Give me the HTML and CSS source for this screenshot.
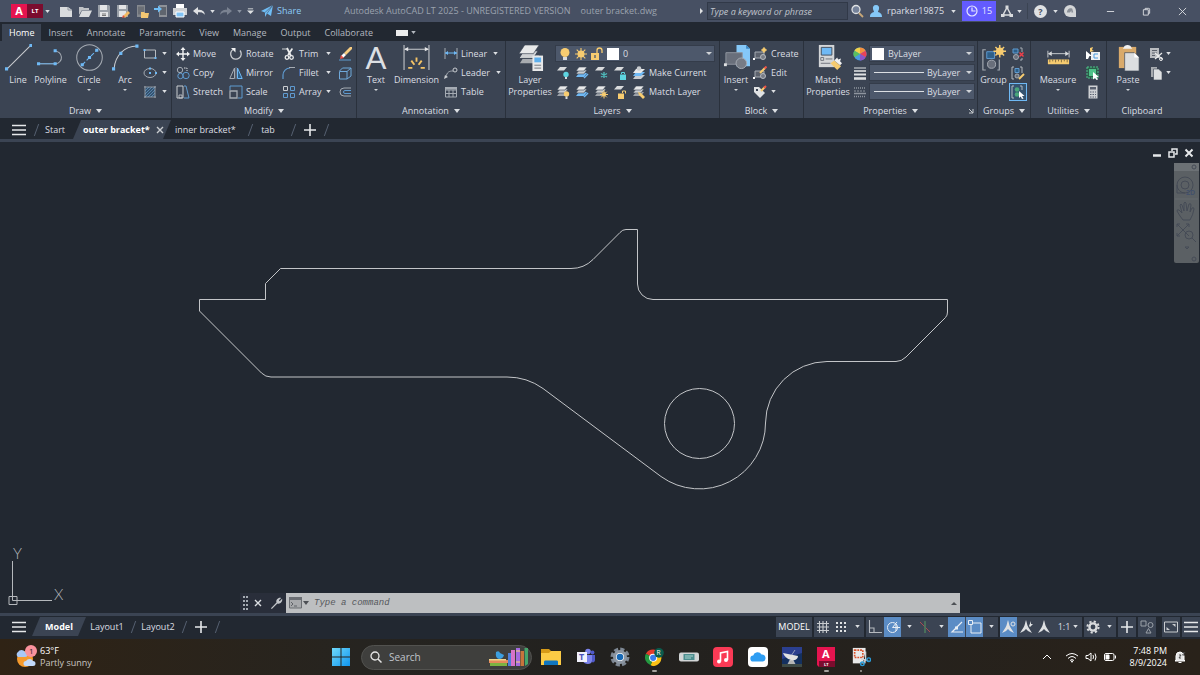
FILE: index.html
```html
<!DOCTYPE html>
<html lang="en">
<head>
  <meta charset="UTF-8" />
  <meta name="viewport" content="width=device-width, initial-scale=1.0" />
  <title>Autodesk AutoCAD LT 2025 - outer bracket.dwg</title>
  <link rel="stylesheet" href="styles.css">
</head>
<body>
  <!-- icon sprite -->
  <svg class="sprite" aria-hidden="true">
    <symbol id="i-down" viewBox="0 0 6 4"><path d="M0 0h6L3 4z" fill="currentColor"/></symbol>
    <symbol id="i-menu" viewBox="0 0 14 12"><path d="M0 1.5h14M0 6h14M0 10.5h14" stroke="#e6e8ea" stroke-width="1.5"/></symbol>
    <symbol id="i-plus" viewBox="0 0 12 12"><path d="M6 0v12M0 6h12" stroke="#e6e8ea" stroke-width="1.6"/></symbol>
    <symbol id="i-close" viewBox="0 0 8 8"><path d="M1 1l6 6M7 1L1 7" stroke="currentColor" stroke-width="1.4"/></symbol>

    <symbol id="i-new" viewBox="0 0 14 14"><path d="M1 3h8l4 3v7H1z" fill="#d9dbdd"/><path d="M9 3v3h4" fill="none" stroke="#8f959f"/></symbol>
    <symbol id="i-open" viewBox="0 0 14 14"><path d="M1 3h4l1 1h5v2H4l-3 5z" fill="#bfc2c6"/><path d="M4 6.5h10L11 13H1z" fill="#d9dbdd"/></symbol>
    <symbol id="i-save" viewBox="0 0 14 14"><path d="M1 1h11l1 1v11H1z" fill="#9aa0a8"/><path d="M3 1h7v5H3zM3 8h8v5H3z" fill="#e3e4e6"/><path d="M5 10h4M5 11.5h4" stroke="#777"/></symbol>
    <symbol id="i-saveas" viewBox="0 0 14 14"><path d="M1 1h11v12H1z" fill="#9aa0a8"/><path d="M3 1h7v4H3zM3 7h7v6H3z" fill="#e3e4e6"/><path d="M7 12l5-5 2 2-5 5z" fill="#f3b962"/><path d="M6 14l1-3 2 2z" fill="#e05040"/></symbol>
    <symbol id="i-device" viewBox="0 0 14 14"><path d="M2 1h8v12H2z" fill="#85898f"/><path d="M3 2.5h6v8H3z" fill="#6b6f76"/><path d="M6 8h3l1 1h4l-1 5H6z" fill="#f3c672"/></symbol>
    <symbol id="i-cloudsave" viewBox="0 0 14 14"><path d="M5 1h8v12H5z" fill="#8e9298"/><path d="M6 3h6v8H6z" fill="#5f656e"/><path d="M0 4h4V1.500L8 5 4 8.500V6H0z" fill="#6fbdf5"/></symbol>
    <symbol id="i-print" viewBox="0 0 14 14"><path d="M3 0h8v4H3z" fill="#fff"/><path d="M0 4h14v7H0z" fill="#cfd2d5"/><path d="M3 8h8v5H3z" fill="#81c3f5" stroke="#fff"/></symbol>
    <symbol id="i-undo" viewBox="0 0 14 12"><path d="M6 2L1 6l5 4V7.300c3 0 5 0 7 2.700-.5-4-3-5.300-7-5.300z" fill="#dfe1e3"/></symbol>
    <symbol id="i-redo" viewBox="0 0 14 12"><path d="M8 2l5 4-5 4V7.300c-3 0-5 0-7 2.700.5-4 3-5.300 7-5.300z" fill="#7a8291"/></symbol>
    <symbol id="i-custom" viewBox="0 0 8 8"><path d="M1 1.5h6" stroke="#dfe1e3"/><path d="M0 3.5h8L4 7.500z" fill="#dfe1e3"/></symbol>
    <symbol id="i-share" viewBox="0 0 12 12"><path d="M0 6L12 0l-2 11-4-2.500L4 12V7.500z" fill="#6fbdf5"/><path d="M4 7.500L12 0 6 8.500" stroke="#475063" fill="none" stroke-width=".6"/></symbol>
    <symbol id="i-mag" viewBox="0 0 14 14"><circle cx="6" cy="5.500" r="4" fill="#75829a" stroke="#dfe1e3" stroke-width="1.3"/><path d="M9 9l4 4" stroke="#c9a878" stroke-width="1.8"/></symbol>
    <symbol id="i-user" viewBox="0 0 14 14"><path d="M7 1c2.500 0 3.500 2 3 4-.3 1.500-1 2-1 3 2 .7 4 1.500 4 5H1c0-3.500 2-4.300 4-5 0-1-.7-1.500-1-3-.5-2 .5-4 3-4z" fill="#85c8f8"/></symbol>
    <symbol id="i-clock" viewBox="0 0 12 12"><circle cx="6" cy="6" r="5" fill="none" stroke="#e6e6ff" stroke-width="1.2"/><path d="M6 2.500V6h3.500" fill="none" stroke="#e6e6ff" stroke-width="1.2"/></symbol>
    <symbol id="i-apps" viewBox="0 0 12 12"><path d="M6 2.500L2 10h8z" fill="none" stroke="#d9dbdd" stroke-width="1.5"/><path d="M4.500.500h3v3h-3zM0 9h3.500v3H0zM8.500 9H12v3H8.500z" fill="#d9dbdd"/></symbol>
    <symbol id="i-assist" viewBox="0 0 13 13"><path d="M6.500 0a6.500 6.500 0 0 1 6.500 6.500V13H6.500a6.500 6.500 0 0 1 0-13z" fill="#d4d6d8"/><path d="M3 8c1-4 3-5 6-4l1 4H8V6L6.500 8z" fill="#8a8f97"/></symbol>

    <symbol id="i-line" viewBox="0 0 26 26"><path d="M2 24L25 1" stroke="#c9ccd0"/><path d="M0 22.500h3v3H0zM23.500 0h3v3h-3z" fill="#6fb9f5"/></symbol>
    <symbol id="i-pline" viewBox="0 0 26 26"><path d="M2 19h16a6 6 0 1 0-1-12" fill="none" stroke="#a5abb3"/><path d="M2 19h16" stroke="#6fa9db"/><path d="M0 17.500h3v3H0zM16 17.500h3v3h-3zM16 5h3v3h-3z" fill="#6fb9f5"/></symbol>
    <symbol id="i-circle" viewBox="0 0 26 26"><circle cx="13" cy="13" r="12.300" fill="none" stroke="#a5abb3"/><path d="M6 20L20 6" stroke="#6fb9f5" stroke-dasharray="4 2"/><path d="M4.500 18.500h3v3h-3zM11.500 11.500h3v3h-3zM18.500 4.500h3v3h-3z" fill="#6fb9f5"/></symbol>
    <symbol id="i-arc" viewBox="0 0 26 26"><path d="M2 24C3 11 12 2 24 2" fill="none" stroke="#c9ccd0"/><path d="M0 22.500h3v3H0zM7 7.500h3v3H7zM22.500.500h3v3h-3z" fill="#6fb9f5"/></symbol>
    <symbol id="i-rect" viewBox="0 0 14 14"><path d="M1.500 3h11v8h-11z" fill="none" stroke="#b6bac0"/><path d="M.5 2h2v2h-2zM11.500 10h2v2h-2z" fill="#6fb9f5"/></symbol>
    <symbol id="i-ellipse" viewBox="0 0 14 14"><ellipse cx="7" cy="7" rx="6" ry="4.500" fill="none" stroke="#a5abb3"/><path d="M6 6h2v2H6zM12 6h2v2h-2zM6 1.500h2v2H6z" fill="#6fb9f5"/></symbol>
    <symbol id="i-hatch" viewBox="0 0 14 14"><path d="M2 2h10v10H2z" fill="#35536f"/><path d="M2 6l4-4M2 9l7-7M2 12L12 2M5 12l7-7M8 12l4-4" stroke="#5f8fbd" stroke-width=".8"/><path d="M2 1v12M12 1v12M1 2h12M1 12h12" stroke="#a5abb3" stroke-width=".8"/></symbol>

    <symbol id="i-move" viewBox="0 0 14 14"><path d="M7 2v10M2 7h10" stroke="#f0f1f2" stroke-width="1.4"/><path d="M7 0l2.500 3h-5zM7 14l2.500-3h-5zM0 7l3-2.500v5zM14 7l-3-2.500v5z" fill="#f0f1f2"/></symbol>
    <symbol id="i-copy" viewBox="0 0 14 14"><circle cx="4" cy="4" r="2.700" fill="none" stroke="#a5abb3"/><path d="M8 2h3v3" fill="none" stroke="#d9dbdd" stroke-dasharray="1.5 1"/><circle cx="4.500" cy="10" r="2.700" fill="none" stroke="#5f9bd0"/><circle cx="10" cy="9.500" r="3.200" fill="none" stroke="#5f9bd0"/></symbol>
    <symbol id="i-stretch" viewBox="0 0 14 14"><path d="M1 1h6v12H1z" fill="none" stroke="#c9ccd0"/><path d="M3 10h3v3H3z" fill="none" stroke="#c9ccd0" stroke-width=".8"/><path d="M8 1h2l3 12H8" fill="none" stroke="#5f9bd0"/></symbol>
    <symbol id="i-rotate" viewBox="0 0 14 14"><path d="M4 2.500a5.300 5.300 0 1 0 7 1" fill="none" stroke="#c9ccd0" stroke-width="1.3"/><path d="M2 1h4.500v4.500z" fill="#f0f1f2"/></symbol>
    <symbol id="i-mirror" viewBox="0 0 14 14"><path d="M5.500 2v10.500H.8z" fill="none" stroke="#a5abb3"/><path d="M8.500 2v10.500h4.700z" fill="#2e5f88" stroke="#6fb9f5"/><path d="M7 1v12" stroke="#8d939d" stroke-width=".7"/></symbol>
    <symbol id="i-scale" viewBox="0 0 14 14"><path d="M1 5V1h12v12H9" fill="none" stroke="#5f9bd0"/><path d="M1 6h7v7H1z" fill="none" stroke="#a5abb3" stroke-width="1.3"/></symbol>
    <symbol id="i-trim" viewBox="0 0 14 14"><path d="M0 2h6M9 2h2" stroke="#c9ccd0"/><path d="M5 1l4 8M10 2L6 8" stroke="#eceded" stroke-width="1.8"/><circle cx="5" cy="10.500" r="1.800" fill="none" stroke="#eceded" stroke-width="1.3"/><circle cx="9.500" cy="10.500" r="1.800" fill="none" stroke="#eceded" stroke-width="1.3"/></symbol>
    <symbol id="i-fillet" viewBox="0 0 14 14"><path d="M1 13V9a7 7 0 0 1 7-7" fill="none" stroke="#5f9bd0" stroke-width="1.2"/><path d="M7 1.500h6" stroke="#a5abb3"/></symbol>
    <symbol id="i-array" viewBox="0 0 14 14"><path d="M1.500 1.500h4v4h-4z" fill="none" stroke="#c9ccd0"/><path d="M8.500 1.500h4v4h-4zM1.500 8.500h4v4h-4zM8.500 8.500h4v4h-4z" fill="none" stroke="#5f9bd0"/></symbol>
    <symbol id="i-erase" viewBox="0 0 14 14"><path d="M6 6l6-6 2 0v2L8 8z" fill="#f7cc80"/><path d="M3 9l3-3 2 2-3 3z" fill="#fff"/><path d="M2 12l1-4 3 3z" fill="#ee5348"/><path d="M1 13h12" stroke="#5f9bd0"/></symbol>
    <symbol id="i-explode" viewBox="0 0 14 14"><path d="M1.500 5.500h7.500V13H1.500zM1.500 5l3-3H13l-4 3.500M13 2v8l-4 3" fill="none" stroke="#6fa9db"/></symbol>
    <symbol id="i-offset" viewBox="0 0 14 14"><path d="M13 3H6a4 4 0 0 0 0 8h7" fill="none" stroke="#a5abb3"/><path d="M13 5.500H7a1.500 1.500 0 0 0 0 3h6" fill="none" stroke="#5f9bd0"/></symbol>

    <symbol id="i-dim" viewBox="0 0 26 26"><path d="M1 1v24M25 1v24M2 5h22" stroke="#c9ccd0"/><path d="M1 5l4-2v4zM25 5l-4-2v4z" fill="#e3e4e6"/><path d="M5 23h4M17 23h4M8 16l3 4M18 16l-3 4M13 13v4" stroke="#f5c466" stroke-width="1.8"/></symbol>
    <symbol id="i-linear" viewBox="0 0 14 14"><path d="M1 1v11M13 1v11" stroke="#a5abb3"/><path d="M1 6h12" stroke="#6fb9f5"/><path d="M1 6l3-2v4zM13 6l-3-2v4z" fill="#6fb9f5"/></symbol>
    <symbol id="i-leader" viewBox="0 0 14 14"><path d="M2 11c1-5 3-6 7-6" fill="none" stroke="#a5abb3"/><path d="M0 13l1-4 3 2z" fill="#c9ccd0"/><circle cx="11" cy="4" r="2" fill="none" stroke="#c9ccd0"/></symbol>
    <symbol id="i-table" viewBox="0 0 14 14"><path d="M1.500 2.500h11V12h-11zM1.500 5h11M1.500 8.500h11M5 5v7M9 5v7" fill="none" stroke="#a5abb3"/><path d="M1 2h12v2.500H1z" fill="#a5abb3"/></symbol>

    <symbol id="i-layerprops" viewBox="0 0 28 28"><path d="M8 12l-5 8h15l5-8z" fill="#a7abb0"/><path d="M7 7l-5 8h15l5-8z" fill="#cfd1d4" stroke="#3b4453"/><path d="M8 1L2 10h15l6-9z" fill="#e8e9ea" stroke="#3b4453" stroke-width=".7"/><path d="M16 12h11v16H16z" fill="#e8e9ea"/><path d="M18 14h7v5h-7z" fill="#5eb0ee"/><path d="M18 22h7M18 25h7" stroke="#70757d"/></symbol>
    <symbol id="i-stack" viewBox="0 0 14 14"><path d="M4 7L1 11h8l3-4z" fill="#9ca1a8"/><path d="M4 4L1 8h8l3-4z" fill="#c9ccd0" stroke="#3b4453" stroke-width=".6"/><path d="M4 1L1 5h8l3-4z" fill="#e8e9ea" stroke="#3b4453" stroke-width=".6"/></symbol>
    <symbol id="i-sheet" viewBox="0 0 14 14"><path d="M4 1L1 4.500h7l3-3.500z" fill="#d9dbdd"/></symbol>
    <symbol id="i-loff" viewBox="0 0 14 14"><use href="#i-sheet"/><circle cx="10" cy="8.500" r="2.700" fill="#5ed4e0"/><path d="M9 11h2v2H9z" fill="#d9dbdd"/></symbol>
    <symbol id="i-liso" viewBox="0 0 14 14"><path d="M4 7L1 11h8l3-4z" fill="#6fb9f5"/><path d="M4 4L1 8h8l3-4z" fill="#c9ccd0" stroke="#3b4453" stroke-width=".6"/><path d="M4 1L1 5h8l3-4z" fill="#e8e9ea" stroke="#3b4453" stroke-width=".6"/><path d="M9 12l4-4" stroke="#6fb9f5" stroke-width="1.5"/></symbol>
    <symbol id="i-lfrz" viewBox="0 0 14 14"><use href="#i-sheet"/><path d="M10 6v6M7 7.500l6 3.500M13 7.500L7 11" stroke="#4fb9ba" stroke-width="1.4"/></symbol>
    <symbol id="i-llock" viewBox="0 0 14 14"><use href="#i-sheet"/><path d="M7 8.500h6V14H7z" fill="#5ed4e0"/><path d="M8.500 8V6.500h3V8" fill="none" stroke="#5ed4e0"/></symbol>
    <symbol id="i-lcur" viewBox="0 0 14 14"><path d="M4 9l-3 4h8l4-4z" fill="#c9ccd0"/><path d="M4 6l-3 4h8l4-4z" fill="#6fb9f5"/><path d="M4 3L1 7h8l4-4z" fill="#e8e9ea"/><circle cx="7" cy="2.500" r="2.300" fill="#c9ccd0"/></symbol>
    <symbol id="i-lon" viewBox="0 0 14 14"><use href="#i-stack"/><circle cx="10.500" cy="9" r="2.700" fill="#f7cc70"/><path d="M9.500 11.500h2V14h-2z" fill="#d9dbdd"/></symbol>
    <symbol id="i-lthaw" viewBox="0 0 14 14"><use href="#i-stack"/><path d="M10 5.500v8M6 9.500h8M7.200 6.700l5.600 5.600M12.800 6.700l-5.600 5.600" stroke="#f7cc70"/><circle cx="10" cy="9.500" r="2" fill="#f7cc70"/></symbol>
    <symbol id="i-lunlock" viewBox="0 0 14 14"><use href="#i-sheet"/><path d="M5 8.500h6V14H5z" fill="#f7cc70"/><path d="M9.500 8V6h3v2.500" fill="none" stroke="#f7cc70"/></symbol>
    <symbol id="i-lmatch" viewBox="0 0 14 14"><use href="#i-stack"/><path d="M6 7l3 1 4 4-2 2-4-4z" fill="#f7cc70"/></symbol>
    <symbol id="i-bulb" viewBox="0 0 14 14"><circle cx="7" cy="5.500" r="4.500" fill="#f7cc70"/><path d="M5 10h4v3H5z" fill="#d9dbdd"/></symbol>
    <symbol id="i-sun" viewBox="0 0 14 14"><path d="M7 1v12M1 7h12M2.700 2.700l8.600 8.600M11.300 2.700l-8.600 8.600" stroke="#f7cc70" stroke-width="1.1"/><circle cx="7" cy="7" r="3.500" fill="#f7cc70"/></symbol>
    <symbol id="i-unlock" viewBox="0 0 14 14"><path d="M1 6h8v7H1z" fill="#f7cc70"/><path d="M7 6V3.500a2.500 2.500 0 0 1 5 0V6" fill="none" stroke="#f7cc70" stroke-width="1.3"/><path d="M5 8v3" stroke="#4d586b" stroke-width="1.3"/></symbol>

    <symbol id="i-insert" viewBox="0 0 28 28"><path d="M14 1h10l4 4v18H14z" fill="#85c8f8"/><path d="M24 1v4h4" fill="#3b87c4"/><path d="M3 9h17v12H3z" fill="#696f7b" stroke="#8f959f"/><circle cx="19" cy="20" r="5.500" fill="#777c86" stroke="#a5abb3"/><path d="M1 20h3v3H1z" fill="#dfe1e3"/></symbol>
    <symbol id="i-create" viewBox="0 0 14 14"><path d="M2 5h9v6H2z" fill="#5c626d" stroke="#a5abb3"/><circle cx="10" cy="10" r="2.500" fill="#777c86" stroke="#b6bac0"/><circle cx="11" cy="3" r="2" fill="#f7cc70"/><path d="M11 0v6M8 3h6" stroke="#f7cc70"/><path d="M0 11h2v2H0z" fill="#fff"/></symbol>
    <symbol id="i-edit" viewBox="0 0 14 14"><path d="M2 5h9v6H2z" fill="#5c626d" stroke="#a5abb3"/><circle cx="10" cy="10" r="2.500" fill="#777c86" stroke="#b6bac0"/><path d="M7 7l5-5" stroke="#f7cc70" stroke-width="2"/><path d="M11.500 2.500l2-2" stroke="#ee5348" stroke-width="2"/><path d="M0 11h2v2H0z" fill="#fff"/></symbol>
    <symbol id="i-attr" viewBox="0 0 14 14"><path d="M1 2h5l6 6-5 5-6-6z" fill="#dfe1e3"/><path d="M3 4h2v2H3z" fill="#3b4453"/><path d="M8 6l4-4" stroke="#f7cc70" stroke-width="2"/><path d="M11 3l2-2" stroke="#ee5348" stroke-width="2"/></symbol>
    <symbol id="i-matchprops" viewBox="0 0 28 28"><path d="M4 1h16v23H4z" fill="#d4d6d8"/><path d="M6.500 3.500h11v8h-11z" fill="#6fb9f5" stroke="#45505f"/><path d="M6 14h3v3H6zM11 15.500h7M6 20h10" stroke="#70757d" fill="none"/><path d="M16 20l4-3 7 6-4 4z" fill="#f7cc70"/><path d="M20 17l3-3 1 2 3-1-1 3 2 2-2 2z" fill="#f2f2f2"/></symbol>
    <symbol id="i-lwt" viewBox="0 0 14 14"><path d="M1 2h12" stroke="#dfe1e3"/><path d="M1 5h12" stroke="#dfe1e3" stroke-width="1.6"/><path d="M1 8.500h12" stroke="#dfe1e3" stroke-width="2"/><path d="M1 12.500h12" stroke="#dfe1e3" stroke-width="2.600"/></symbol>
    <symbol id="i-ltype" viewBox="0 0 14 14"><path d="M1 3h12M1 11.500h12" stroke="#8f959f" stroke-width="1.5" stroke-dasharray="1 1"/><path d="M1 6h12" stroke="#8f959f" stroke-dasharray="2 1"/><path d="M1 8.500h12" stroke="#8f959f" stroke-width="1.5"/></symbol>

    <symbol id="i-group" viewBox="0 0 28 28"><path d="M6 6H3v21h3M18 27h2V16" fill="none" stroke="#a5abb3" stroke-width="1.2"/><path d="M7 8h8v7H7z" fill="#2e5f88" stroke="#5f9bd0"/><circle cx="12" cy="21" r="4.200" fill="#696f7b" stroke="#a5abb3"/><path d="M20.500 1v13M14 7.500h13M16 3l9 9M25 3l-9 9" stroke="#f7cc70" stroke-width="1.5"/><circle cx="20.500" cy="7.500" r="4" fill="#f7cc70"/></symbol>
    <symbol id="i-ungroup" viewBox="0 0 14 14"><path d="M2 2h5v4H2z" fill="#2e5f88" stroke="#5f9bd0"/><circle cx="5" cy="10" r="2.500" fill="#696f7b" stroke="#a5abb3"/><path d="M9 1h2v4M11 11v2H9" fill="none" stroke="#a5abb3"/><path d="M8.500 5.500l4 4M12.500 5.500l-4 4" stroke="#f0404a" stroke-width="1.5"/></symbol>
    <symbol id="i-groupedit" viewBox="0 0 14 14"><path d="M3 1H1v12h2M9 1h2v6" fill="none" stroke="#b6bac0"/><path d="M4 2.500h4v4H4z" fill="#2e5f88" stroke="#5f9bd0"/><circle cx="6" cy="10" r="2" fill="#696f7b" stroke="#a5abb3"/><path d="M8 13l5-5" stroke="#f7cc70" stroke-width="2"/></symbol>
    <symbol id="i-groupsel" viewBox="0 0 14 14"><path d="M3 1H1v12h2M9 1h2v4" fill="none" stroke="#b6bac0"/><circle cx="6" cy="4.500" r="2.300" fill="#4aa67b"/><circle cx="6" cy="9.500" r="2.300" fill="#4aa67b"/><path d="M8 6l5.500 5H11l1.500 2.500-1.500.500-1.300-2.500L8 13z" fill="#fff"/></symbol>
    <symbol id="i-measure" viewBox="0 0 28 28"><path d="M3 7v7M25 7v7M4 10h20" stroke="#c9ccd0"/><path d="M3 10l4-2.500v5zM25 10l-4-2.500v5z" fill="#d9dbdd"/><path d="M3 16h22v5H3z" fill="#f7cc70"/><path d="M5 16v3M8 16v2M11 16v3M14 16v2M17 16v3M20 16v2M23 16v3" stroke="#6b5b36" stroke-width=".8"/></symbol>
    <symbol id="i-qselect" viewBox="0 0 14 14"><path d="M5 5h9v8H5z" fill="#f0f1f2"/><path d="M8 7v4h4M8 7h4" fill="none" stroke="#4a9be0"/><path d="M0 4l6 5H3.500L2 12H0z" fill="#fff"/><path d="M4 1l3-1-1 3 2 1-4 1z" fill="#f7cc70"/></symbol>
    <symbol id="i-selall" viewBox="0 0 14 14"><path d="M1 1h11v11H1z" fill="#2b5f4a" stroke="#4fc28a" stroke-dasharray="2 1"/><path d="M3 3h7v7H3z" fill="#4fc28a"/><path d="M7 6l6 5h-2.500l1.500 2.500-1.500.500L9 12l-2 1.500z" fill="#fff"/></symbol>
    <symbol id="i-calc" viewBox="0 0 14 14"><path d="M2.500.500h9v13h-9z" fill="#cfd1d4"/><path d="M4 2h6v2.500H4z" fill="#596170"/><path d="M4 7h6M4 9.500h6M4 12h6" stroke="#596170" stroke-width="1.2" stroke-dasharray="1.5 1"/></symbol>
    <symbol id="i-paste" viewBox="0 0 28 28"><path d="M4 3h18v22H4z" fill="#d9aa6b"/><path d="M9 4c0-4 8-4 8 0l1 1H8z" fill="#f0f1f2"/><path d="M10 9h10l5 5v14H10z" fill="#dcdee0" stroke="#3b4453" stroke-width=".7"/><path d="M20 9v5h5" fill="#fff"/></symbol>
    <symbol id="i-cut" viewBox="0 0 14 14"><path d="M1 1h9v10H1z" fill="#b9bcc0"/><path d="M3 3.500h5M3 6h5M3 8.500h3" stroke="#5b616b"/><path d="M6 6l7 6M13 6l-7 6" stroke="#eceded" stroke-width="1.2"/><circle cx="12" cy="12" r="1.500" fill="none" stroke="#eceded"/></symbol>
    <symbol id="i-copyclip" viewBox="0 0 14 14"><path d="M2 1h6v10H2z" fill="#a7abb0"/><path d="M4.500 3h5L13 6v8H4.500z" fill="#dfe1e3" stroke="#3b4453" stroke-width=".6"/></symbol>
    <symbol id="i-wheel" viewBox="0 0 14 14"><circle cx="7" cy="7" r="6.500" fill="#4a9be0"/><path d="M7 7V.5a6.500 6.500 0 0 1 5.600 3.200z" fill="#f5903d"/><path d="M7 7V.5a6.500 6.500 0 0 0-5.600 3.200z" fill="#f0d24a"/><path d="M7 7L1.400 3.700a6.500 6.500 0 0 0 0 6.600z" fill="#5bbf5d"/><path d="M7 7l5.600-3.300a6.500 6.500 0 0 1 0 6.600z" fill="#ea4257"/><path d="M7 7l5.600 3.300A6.500 6.500 0 0 1 7 13.500z" fill="#8d53c7"/></symbol>

    <symbol id="s-grid" viewBox="0 0 14 14"><path d="M3.500 1v12M7 1v12M10.500 1v12M1 3.500h12M1 7h12M1 10.500h12" stroke="#c9ccd0" stroke-width="1.1"/></symbol>
    <symbol id="s-dots" viewBox="0 0 14 14"><path d="M2 3h11M2 7h11M2 11h11" stroke="#dfe1e3" stroke-width="2" stroke-dasharray="2 2"/></symbol>
    <symbol id="s-ortho" viewBox="0 0 14 14"><path d="M1.500 0v12.500H14M1.500 8H6v4.500" fill="none" stroke="#b6bac0" stroke-width="1.1"/></symbol>
    <symbol id="s-polar" viewBox="0 0 14 14"><circle cx="6.500" cy="7.500" r="5" fill="none" stroke="#e8eef5"/><path d="M6.500 7.500H14M6.500 7.500L11 2M10 4v7" stroke="#e8eef5"/></symbol>
    <symbol id="s-iso" viewBox="0 0 14 14"><path d="M2 2l10 10" stroke="#a94a52"/><path d="M7 1v12" stroke="#4d7a5d" stroke-width="1.6"/></symbol>
    <symbol id="s-angle" viewBox="0 0 14 14"><path d="M12 2L2 12h11" fill="none" stroke="#e8eef5" stroke-width="1.2"/><path d="M5 6.500h3v3H5z" fill="#e8eef5"/></symbol>
    <symbol id="s-osnap" viewBox="0 0 14 14"><path d="M3 3h10v10H3z" fill="none" stroke="#e8eef5"/><path d="M.500.500h4v4h-4z" fill="#5b8cc5" stroke="#e8eef5"/></symbol>
    <symbol id="s-person" viewBox="0 0 14 14"><path d="M6 0c1 3 1 5 2.500 7.500L12 13l-4-2-2-2-2 2-4 2 3.500-5.500C5 5 5 3 6 0z" fill="#dfe1e3"/></symbol>
    <symbol id="s-person-o" viewBox="0 0 14 14"><use href="#s-person"/><circle cx="11" cy="4" r="2" fill="none" stroke="#dfe1e3"/></symbol>
    <symbol id="s-person-s" viewBox="0 0 14 14"><use href="#s-person"/><path d="M9 6l2-5 0 3 2 0-3 3z" fill="#dfe1e3"/></symbol>
    <symbol id="s-gear" viewBox="0 0 14 14"><circle cx="7" cy="7" r="3.600" fill="none" stroke="#d9dbdd" stroke-width="2.400"/><circle cx="7" cy="7" r="5.600" fill="none" stroke="#d9dbdd" stroke-width="2" stroke-dasharray="2.200 2.200"/></symbol>
    <symbol id="s-isolate" viewBox="0 0 14 14"><path d="M1 1h5v5H1zM6 13l2.500-4.500L11 13z" fill="none" stroke="#9aa0a8"/><circle cx="10.500" cy="5" r="2.500" fill="none" stroke="#9aa0a8"/></symbol>
    <symbol id="s-clean" viewBox="0 0 14 12"><path d="M.5 1h13v10H.5z" fill="none" stroke="#c9ccd0"/><path d="M8 3h3.500v3zM6 9H2.500V6z" fill="#c9ccd0"/></symbol>

    <symbol id="t-win" viewBox="0 0 20 20"><path d="M1 1h8.500v8.500H1zM10.500 1H19v8.500h-8.500zM1 10.500h8.500V19H1zM10.500 10.500H19V19h-8.500z" fill="url(#gwin)"/></symbol>
    <symbol id="t-folder" viewBox="0 0 20 20"><path d="M0 2h8l2 2h10v14H0z" fill="#d69a17"/><path d="M0 6h8l2-2h10v14H0z" fill="#fbcb45"/><path d="M3 18v-3c0-1 .5-1.500 1.500-1.500h11c1 0 1.500.500 1.500 1.500v3z" fill="#1076c0"/></symbol>
    <symbol id="t-teams" viewBox="0 0 20 20"><circle cx="12" cy="4.500" r="2.800" fill="#7b83eb"/><circle cx="16.500" cy="5.500" r="1.900" fill="#5059c9"/><path d="M7 8h9v6c0 4-8 4-9 0z" fill="#7b83eb"/><path d="M16 8h3v5c0 2-2 3-3 2z" fill="#5059c9"/><path d="M1 5h10v10H1z" fill="#f1f1fb"/></symbol>
    <symbol id="t-gear" viewBox="0 0 20 20"><circle cx="10" cy="10" r="7.500" fill="none" stroke="#7e8894" stroke-width="4" stroke-dasharray="3.900 1.990"/><circle cx="10" cy="10" r="5.500" fill="#fff" stroke="#8c96a2" stroke-width="3"/><circle cx="10" cy="10" r="3.300" fill="#1668b5"/></symbol>
    <symbol id="t-chrome" viewBox="0 0 24 22"><path d="M11 12L2.300 7A10 10 0 0 1 20 8z" fill="#e33b2e"/><path d="M11 12l9-4a10 10 0 0 1-9 14l-3-1z" fill="#fbc116"/><path d="M11 12l-3 9A10 10 0 0 1 2.300 7z" fill="#249a41"/><circle cx="11" cy="12" r="4.800" fill="#fff"/><circle cx="11" cy="12" r="3.700" fill="#3b7ded"/><circle cx="18" cy="6" r="5.800" fill="#0b5c4d"/></symbol>
    <symbol id="t-device" viewBox="0 0 20 20"><rect y="5.500" width="20" height="9" rx="2" fill="#d2d5d6"/><path d="M4.500 7h11v6h-11z" fill="#4b8d8e"/><path d="M6 9h8M6 11h6" stroke="#a9d4ce"/></symbol>
    <symbol id="t-music" viewBox="0 0 20 20"><rect width="20" height="20" rx="4" fill="#fa3a55"/><path d="M7.500 14.500V6l7-1.500V13" fill="none" stroke="#fff" stroke-width="1.6"/><circle cx="6" cy="14.500" r="2" fill="#fff"/><circle cx="13" cy="13" r="2" fill="#fff"/></symbol>
    <symbol id="t-cloud" viewBox="0 0 20 20"><rect width="20" height="20" rx="4" fill="#fff"/><path d="M5.500 14.500a3 3 0 0 1-.3-6 4.500 4.500 0 0 1 8.300-1 3.600 3.600 0 0 1 1.500 7z" fill="#2e9df2"/></symbol>
    <symbol id="t-dish" viewBox="0 0 20 20"><path d="M0 0h20v20H0z" fill="#14305f"/><path d="M0 0h20v6L0 12z" fill="#2b3f8f"/><path d="M1 6l15 3c0 3-3 5-7 4S2 9 1 6z" fill="#e2e2e2"/><path d="M9 9l4-6M8 13l-3 6h9l-3-6z" fill="#b5b5b5" stroke="#ddd" stroke-width=".6"/><path d="M0 17h20v3H0z" fill="#3e4a46"/></symbol>
    <symbol id="t-acad" viewBox="0 0 20 20"><path d="M1 0h18v20H3l-2-2z" fill="#e5144f"/><path d="M3 14h16v6H3z" fill="#7b0c2e"/></symbol>
    <symbol id="t-snip" viewBox="0 0 22 22"><path d="M2 1h14v17H2z" fill="#e9e9e9"/><path d="M4 3.500h9v8H4z" fill="none" stroke="#d9532c" stroke-width="1.8" stroke-dasharray="2 1"/><path d="M16 5v9l-3 4M11 13l8 2" stroke="#cfd1d4" stroke-width="1.6"/><circle cx="12.500" cy="18.500" r="2" fill="none" stroke="#2a9bd8" stroke-width="1.5"/><circle cx="19.500" cy="14" r="2" fill="none" stroke="#2a9bd8" stroke-width="1.5"/></symbol>
    <symbol id="t-books" viewBox="0 0 40 20"><path d="M0 13h19v3H0z" fill="#e58a5b"/><path d="M1 16h17v3H1z" fill="#7cb342"/><path d="M0 12h17v1.500H0z" fill="#f1d48a"/><path d="M7 5q3-2 4 1l4 2q-1 4-5 4-4-1-3-7z" fill="#3c9fe0"/><path d="M19 6h3v13h-3z" fill="#4f7fd6"/><path d="M22 3h4v16h-4z" fill="#d873c8"/><path d="M27 1h4v18h-4z" fill="#a46be0"/><path d="M27 4h4M27 15h4" stroke="#ffd27a"/><path d="M31.500 4H35v15h-3.500z" fill="#c8743c"/><path d="M35.500 1H39v16l-3 2z" fill="#45a56b"/></symbol>
    <linearGradient id="gwin" x1="0" y1="0" x2="1" y2="1"><stop offset="0" stop-color="#6fd9fb"/><stop offset="1" stop-color="#0f94ee"/></linearGradient>
  </svg>

  <!-- title bar -->
  <header class="titlebar">
    <button class="app-logo" aria-label="Application menu"><b>A</b><small>LT</small></button>
    <button class="arrow" aria-label="Menu"><svg><use href="#i-down"/></svg></button>
    <div class="qat">
      <button aria-label="New"><svg><use href="#i-new"/></svg></button>
      <button aria-label="Open"><svg><use href="#i-open"/></svg></button>
      <button aria-label="Save"><svg><use href="#i-save"/></svg></button>
      <button aria-label="Save as"><svg><use href="#i-saveas"/></svg></button>
      <button aria-label="Open from web"><svg><use href="#i-device"/></svg></button>
      <button aria-label="Save to web"><svg><use href="#i-cloudsave"/></svg></button>
      <button aria-label="Plot"><svg><use href="#i-print"/></svg></button>
      <button aria-label="Undo"><svg><use href="#i-undo"/></svg></button>
    </div>
    <button class="arrow" aria-label="Undo list"><svg><use href="#i-down"/></svg></button>
    <button class="tool" aria-label="Redo"><svg class="ico"><use href="#i-redo"/></svg></button>
    <button class="arrow dim" aria-label="Redo list"><svg><use href="#i-down"/></svg></button>
    <button class="customize" aria-label="Customize"><svg><use href="#i-custom"/></svg></button>
    <button class="share"><svg><use href="#i-share"/></svg>Share</button>
    <div class="window-title"><span>Autodesk AutoCAD LT 2025 - UNREGISTERED VERSION</span><span>outer bracket.dwg</span></div>
    <span class="search-expand"></span>
    <input class="help-search" type="text" placeholder="Type a keyword or phrase" aria-label="Search help">
    <button class="tool" aria-label="Search"><svg class="ico"><use href="#i-mag"/></svg></button>
    <button class="account"><svg class="ico"><use href="#i-user"/></svg>rparker19875<svg class="caret"><use href="#i-down"/></svg></button>
    <button class="trial"><svg><use href="#i-clock"/></svg>15</button>
    <button class="app-store" aria-label="App store"><svg class="ico12"><use href="#i-apps"/></svg><svg class="caret"><use href="#i-down"/></svg></button>
    <button class="help" aria-label="Help"><i>?</i><svg class="caret"><use href="#i-down"/></svg><svg class="ico12"><use href="#i-assist"/></svg></button>
    <div class="win-controls">
      <button aria-label="Minimize"><svg viewBox="0 0 10 10"><path d="M1 5h8"/></svg></button>
      <button aria-label="Restore"><svg viewBox="0 0 10 10"><path d="M1.500 3h5.500v6H1.500zM3.500 3V1.500h4q1 0 1 1V7H7"/></svg></button>
      <button aria-label="Close"><svg viewBox="0 0 10 10"><path d="M1 1l8 8M9 1L1 9"/></svg></button>
    </div>
  </header>

  <nav class="ribbon-tabs">
    <button class="active">Home</button>
    <button>Insert</button>
    <button>Annotate</button>
    <button>Parametric</button>
    <button>View</button>
    <button>Manage</button>
    <button>Output</button>
    <button>Collaborate</button>
    <button class="ribbon-toggle" aria-label="Minimize ribbon"><i></i><svg class="caret"><use href="#i-down"/></svg></button>
  </nav>

  <!-- ribbon -->
  <section class="ribbon">
    <div class="panel">
      <div class="panel-body draw">
        <button class="big"><svg><use href="#i-line"/></svg>Line</button>
        <button class="big"><svg><use href="#i-pline"/></svg>Polyline</button>
        <button class="big more"><svg><use href="#i-circle"/></svg>Circle</button>
        <button class="big more"><svg><use href="#i-arc"/></svg>Arc</button>
        <div class="rows">
          <button aria-label="Rectangle"><svg class="ico"><use href="#i-rect"/></svg><svg class="caret"><use href="#i-down"/></svg></button>
          <button aria-label="Ellipse"><svg class="ico"><use href="#i-ellipse"/></svg><svg class="caret"><use href="#i-down"/></svg></button>
          <button aria-label="Hatch"><svg class="ico"><use href="#i-hatch"/></svg><svg class="caret"><use href="#i-down"/></svg></button>
        </div>
      </div>
      <button class="panel-title">Draw<svg class="caret"><use href="#i-down"/></svg></button>
    </div>

    <div class="panel">
      <div class="panel-body modify">
        <div class="rows">
          <button><svg class="ico"><use href="#i-move"/></svg>Move</button>
          <button><svg class="ico"><use href="#i-copy"/></svg>Copy</button>
          <button><svg class="ico"><use href="#i-stretch"/></svg>Stretch</button>
        </div>
        <div class="rows">
          <button><svg class="ico"><use href="#i-rotate"/></svg>Rotate</button>
          <button><svg class="ico"><use href="#i-mirror"/></svg>Mirror</button>
          <button><svg class="ico"><use href="#i-scale"/></svg>Scale</button>
        </div>
        <div class="rows spread">
          <button><svg class="ico"><use href="#i-trim"/></svg>Trim<svg class="caret"><use href="#i-down"/></svg></button>
          <button><svg class="ico"><use href="#i-fillet"/></svg>Fillet<svg class="caret"><use href="#i-down"/></svg></button>
          <button><svg class="ico"><use href="#i-array"/></svg>Array<svg class="caret"><use href="#i-down"/></svg></button>
        </div>
        <div class="rows">
          <button aria-label="Erase"><svg class="ico"><use href="#i-erase"/></svg></button>
          <button aria-label="Explode"><svg class="ico"><use href="#i-explode"/></svg></button>
          <button aria-label="Offset"><svg class="ico"><use href="#i-offset"/></svg></button>
        </div>
      </div>
      <button class="panel-title">Modify<svg class="caret"><use href="#i-down"/></svg></button>
    </div>

    <div class="panel">
      <div class="panel-body annotation">
        <button class="big more"><span class="letter">A</span>Text</button>
        <button class="big"><svg><use href="#i-dim"/></svg>Dimension</button>
        <div class="rows">
          <button><svg class="ico"><use href="#i-linear"/></svg>Linear<svg class="caret"><use href="#i-down"/></svg></button>
          <button><svg class="ico"><use href="#i-leader"/></svg>Leader<svg class="caret"><use href="#i-down"/></svg></button>
          <button><svg class="ico"><use href="#i-table"/></svg>Table</button>
        </div>
      </div>
      <button class="panel-title">Annotation<svg class="caret"><use href="#i-down"/></svg></button>
    </div>

    <div class="panel">
      <div class="panel-body layers">
        <button class="big"><svg><use href="#i-layerprops"/></svg>Layer<br>Properties</button>
        <div class="rows">
          <div class="combo layer-combo">
            <svg class="ico"><use href="#i-bulb"/></svg>
            <svg class="ico"><use href="#i-sun"/></svg>
            <svg class="ico"><use href="#i-unlock"/></svg>
            <i class="swatch"></i>
            <select aria-label="Current layer"><option>0</option></select>
          </div>
          <div class="icon-row">
            <button aria-label="Layer off"><svg class="ico"><use href="#i-loff"/></svg></button>
            <button aria-label="Isolate"><svg class="ico"><use href="#i-liso"/></svg></button>
            <button aria-label="Freeze"><svg class="ico"><use href="#i-lfrz"/></svg></button>
            <button aria-label="Lock"><svg class="ico"><use href="#i-llock"/></svg></button>
            <button><svg class="ico"><use href="#i-lcur"/></svg>Make Current</button>
          </div>
          <div class="icon-row">
            <button aria-label="Layers on"><svg class="ico"><use href="#i-lon"/></svg></button>
            <button aria-label="Unisolate"><svg class="ico"><use href="#i-liso"/></svg></button>
            <button aria-label="Thaw"><svg class="ico"><use href="#i-lthaw"/></svg></button>
            <button aria-label="Unlock"><svg class="ico"><use href="#i-lunlock"/></svg></button>
            <button><svg class="ico"><use href="#i-lmatch"/></svg>Match Layer</button>
          </div>
        </div>
      </div>
      <button class="panel-title">Layers<svg class="caret"><use href="#i-down"/></svg></button>
    </div>

    <div class="panel">
      <div class="panel-body block">
        <button class="big more"><svg><use href="#i-insert"/></svg>Insert</button>
        <div class="rows">
          <button><svg class="ico"><use href="#i-create"/></svg>Create</button>
          <button><svg class="ico"><use href="#i-edit"/></svg>Edit</button>
          <button aria-label="Edit attributes"><svg class="ico"><use href="#i-attr"/></svg><svg class="caret"><use href="#i-down"/></svg></button>
        </div>
      </div>
      <button class="panel-title">Block<svg class="caret"><use href="#i-down"/></svg></button>
    </div>

    <div class="panel">
      <div class="panel-body props">
        <button class="big"><svg><use href="#i-matchprops"/></svg>Match<br>Properties</button>
        <div class="rows">
          <svg class="ico"><use href="#i-wheel"/></svg>
          <svg class="ico"><use href="#i-lwt"/></svg>
          <svg class="ico"><use href="#i-ltype"/></svg>
        </div>
        <div class="rows">
          <div class="combo"><i class="swatch"></i><select aria-label="Object color"><option>ByLayer</option></select></div>
          <div class="combo"><i class="stroke"></i><select aria-label="Lineweight"><option>ByLayer</option></select></div>
          <div class="combo"><i class="stroke"></i><select aria-label="Linetype"><option>ByLayer</option></select></div>
        </div>
      </div>
      <button class="panel-title">Properties<svg class="caret"><use href="#i-down"/></svg></button>
      <button class="launcher" aria-label="Properties palette"><svg viewBox="0 0 6 6"><path d="M1 1l4 4M5 1v4H1" fill="none" stroke="#c9ccd0"/></svg></button>
    </div>

    <div class="panel">
      <div class="panel-body groups">
        <button class="big"><svg><use href="#i-group"/></svg>Group</button>
        <div class="rows">
          <button aria-label="Ungroup"><svg class="ico"><use href="#i-ungroup"/></svg></button>
          <button aria-label="Group edit"><svg class="ico"><use href="#i-groupedit"/></svg></button>
          <button class="on" aria-label="Group selection"><svg class="ico"><use href="#i-groupsel"/></svg></button>
        </div>
      </div>
      <button class="panel-title">Groups<svg class="caret"><use href="#i-down"/></svg></button>
    </div>

    <div class="panel">
      <div class="panel-body utils">
        <button class="big more"><svg><use href="#i-measure"/></svg>Measure</button>
        <div class="rows">
          <button aria-label="Quick select"><svg class="ico"><use href="#i-qselect"/></svg></button>
          <button aria-label="Select all"><svg class="ico"><use href="#i-selall"/></svg></button>
          <button aria-label="Calculator"><svg class="ico"><use href="#i-calc"/></svg></button>
        </div>
      </div>
      <button class="panel-title">Utilities<svg class="caret"><use href="#i-down"/></svg></button>
    </div>

    <div class="panel last">
      <div class="panel-body clip">
        <button class="big more"><svg><use href="#i-paste"/></svg>Paste</button>
        <div class="rows">
          <button aria-label="Cut"><svg class="ico"><use href="#i-cut"/></svg><svg class="caret"><use href="#i-down"/></svg></button>
          <button aria-label="Copy clip"><svg class="ico"><use href="#i-copyclip"/></svg><svg class="caret"><use href="#i-down"/></svg></button>
        </div>
      </div>
      <div class="panel-title">Clipboard</div>
    </div>
  </section>

  <nav class="file-tabs">
    <button class="menu" aria-label="Menu"><svg><use href="#i-menu"/></svg></button>
    <i class="slash"></i>
    <button class="start">Start</button>
    <button class="file active">outer bracket*<svg><use href="#i-close"/></svg></button>
    <button class="file">inner bracket*</button>
    <i class="slash"></i>
    <button class="blank">tab</button>
    <i class="slash"></i>
    <button class="add" aria-label="New tab"><svg><use href="#i-plus"/></svg></button>
    <i class="slash"></i>
  </nav>

  <main class="canvas">
    <svg class="drawing" viewBox="0 142 1200 471">
      <path d="M199.500 299.500H265.500V283.500L280.500 268.500H571Q584 268.500 593 259.500L620 232.500Q622.500 229.500 626 229.500H637.500V284A15.500 15.500 0 0 0 653 299.500H947.500V312Q947.500 315.500 945.500 317.500L906 357Q901.500 361.500 896 361.500H827A62 62 0 0 0 765.500 423A66 66 0 0 1 661 476.500L543 388.500Q527 377 507 377H271Q265.500 377 261.500 373L199.500 311Z"/>
      <circle cx="699.500" cy="423.500" r="35"/>
    </svg>

    <div class="mdi-controls">
      <button aria-label="Minimize drawing"><svg viewBox="0 0 10 10"><path d="M1 7.500h8" stroke-width="2.500"/></svg></button>
      <button aria-label="Restore drawing"><svg viewBox="0 0 10 10"><path d="M1 4h5v5H1zM4 3V1h5v5H7" stroke-width="1.5"/></svg></button>
      <button aria-label="Close drawing"><svg viewBox="0 0 10 10"><path d="M1.500 1.500l7 7M8.500 1.500l-7 7" stroke-width="2"/></svg></button>
    </div>

    <div class="navbar">
      <svg viewBox="0 0 25 100">
        <path d="M0 0h25v8H0z" fill="#6c7175" stroke="none"/>
        <path d="M1 36h23" stroke="#666b6f"/>
        <circle cx="20" cy="4" r="2"/><circle cx="20" cy="96" r="2"/>
        <circle cx="11" cy="22" r="8"/><circle cx="11" cy="22" r="4"/><path d="M3 22v8h8"/>
        <text x="12" y="32" font-size="7" font-weight="700">2D</text>
        <path d="M6 53l-3-5q0-2 2-1l3 3-2-8q1-2 2 0l2 6V40q1-2 2 0l1 8 2-7q2-1 2 1l-1 7 2-4q2-1 2 1-1 6-4 11H9z"/>
        <path d="M3 61l12 12M3 73l12-12M3 64v-3h3M15 64v-3h-3M3 70v3h3"/><circle cx="15" cy="72" r="4"/><path d="M18 75l4 4"/>
        <path d="M11 84h4l-2 2z"/>
      </svg>
    </div>

    <svg class="ucs" viewBox="0 0 60 66">
      <path d="M4.500 14v39.500H44M1 49.500h8v8H1z"/>
      <text x="5" y="12">Y</text>
      <text x="46" y="53">X</text>
    </svg>

    <div class="command">
      <span class="grip"></span>
      <button aria-label="Close command line"><svg class="x"><use href="#i-close"/></svg></button>
      <button aria-label="Customize command line"><svg class="wrench" viewBox="0 0 14 14"><path d="M1 12l6-6c-1-3 2-6 5-5L9.500 3.500l1 1L13 2c1 3-2 6-5 5l-6 6z" fill="#c3c6ca"/></svg></button>
      <div class="command-box">
        <svg class="prompt" viewBox="0 0 20 12"><path d="M.5 1h12v10H.5z" fill="#a7a9ac" stroke="#6b6e73"/><path d="M0 0h13v3H0z" fill="#6b6e73"/><path d="M2 5l2 2-2 2M5 9h3" fill="none" stroke="#4d5055" stroke-width=".8"/><path d="M14 4h6l-3 4z" fill="#4d5055"/></svg>
        <input type="text" placeholder="Type a command" aria-label="Command">
        <i class="up"></i>
      </div>
    </div>
  </main>

  <!-- layout tabs + status bar -->
  <footer class="statusbar">
    <button class="menu" aria-label="Layouts menu"><svg><use href="#i-menu"/></svg></button>
    <button class="model active">Model</button>
    <button class="layout">Layout1</button>
    <i class="slash"></i>
    <button class="layout">Layout2</button>
    <i class="slash"></i>
    <button class="add" aria-label="New layout"><svg><use href="#i-plus"/></svg></button>
    <i class="slash"></i>

    <div class="status-tools">
      <div class="cluster"><button class="space">MODEL</button></div>
      <div class="cluster">
        <button aria-label="Grid"><svg class="ico"><use href="#s-grid"/></svg></button>
        <button aria-label="Snap"><svg class="ico"><use href="#s-dots"/></svg></button>
        <button class="arrow" aria-label="Snap options"><svg><use href="#i-down"/></svg></button>
      </div>
      <div class="cluster">
        <button aria-label="Ortho"><svg class="ico"><use href="#s-ortho"/></svg></button>
        <button class="on" aria-label="Polar tracking"><svg class="ico"><use href="#s-polar"/></svg></button>
        <button class="arrow" aria-label="Polar options"><svg><use href="#i-down"/></svg></button>
        <button aria-label="Isometric"><svg class="ico"><use href="#s-iso"/></svg></button>
        <button class="arrow" aria-label="Isometric options"><svg><use href="#i-down"/></svg></button>
        <button class="on" aria-label="Snap tracking"><svg class="ico"><use href="#s-angle"/></svg></button>
        <button class="on" aria-label="Object snap"><svg class="ico"><use href="#s-osnap"/></svg></button>
        <button class="arrow" aria-label="Snap list"><svg><use href="#i-down"/></svg></button>
      </div>
      <div class="cluster">
        <button class="on" aria-label="Annotation visibility"><svg class="ico"><use href="#s-person-o"/></svg></button>
        <button aria-label="Auto scale"><svg class="ico"><use href="#s-person-s"/></svg></button>
        <button aria-label="Annotation scale"><svg class="ico"><use href="#s-person"/></svg></button>
        <button class="ratio">1:1<svg class="caret"><use href="#i-down"/></svg></button>
      </div>
      <div class="cluster">
        <button aria-label="Workspace"><svg class="ico"><use href="#s-gear"/></svg></button>
        <button class="arrow" aria-label="Workspace list"><svg><use href="#i-down"/></svg></button>
      </div>
      <div class="cluster"><button aria-label="Annotation monitor"><svg class="ico12"><use href="#i-plus"/></svg></button></div>
      <div class="cluster"><button aria-label="Isolate objects"><svg class="ico"><use href="#s-isolate"/></svg></button></div>
      <div class="cluster end"><button aria-label="Clean screen"><svg class="ico"><use href="#s-clean"/></svg></button></div>
      <div class="cluster"><button aria-label="Customization"><svg class="ico"><use href="#i-menu"/></svg></button></div>
    </div>
  </footer>

  <!-- windows taskbar -->
  <div class="taskbar">
    <button class="weather">
      <svg viewBox="0 0 22 24"><circle cx="10" cy="14" r="8" fill="#f59a2c"/><path d="M3 12a3 3 0 0 1 0-5 4 4 0 0 1 7 0 2.500 2.500 0 0 1 0 5z" fill="#a9c8f5"/><path d="M11 21a2.500 2.500 0 0 1 0-5 4 4 0 0 1 7 0 2.500 2.500 0 0 1 0 5z" fill="#c3dafa"/><circle cx="16" cy="6" r="6" fill="#fb929c"/><text x="14" y="9" font-size="8" fill="#222">1</text></svg>
      <span>63°F<br><em>Partly sunny</em></span>
    </button>
    <div class="apps">
      <button class="win-start" aria-label="Start"><svg><use href="#t-win"/></svg></button>
      <label class="win-search">
        <svg viewBox="0 0 12 12"><circle cx="5" cy="5" r="4" fill="none" stroke="#e6e6e6" stroke-width="1.3"/><path d="M8 8l3.500 3.500" stroke="#e6e6e6" stroke-width="1.5"/></svg>
        <input type="text" placeholder="Search" aria-label="Search Windows">
        <svg class="books"><use href="#t-books"/></svg>
      </label>
      <div class="pins">
        <button aria-label="File Explorer"><svg><use href="#t-folder"/></svg></button>
        <button aria-label="Teams"><svg viewBox="0 0 20 20"><use href="#t-teams"/><text x="3" y="13" font-size="9" font-weight="700" fill="#4b53bc">T</text></svg></button>
        <button aria-label="Settings"><svg><use href="#t-gear"/></svg></button>
        <button class="running" aria-label="Chrome"><svg viewBox="0 0 24 22"><use href="#t-chrome"/><text x="15" y="9" font-size="8" fill="#fff">R</text></svg></button>
        <button aria-label="Device"><svg><use href="#t-device"/></svg></button>
        <button aria-label="Music"><svg><use href="#t-music"/></svg></button>
        <button aria-label="iCloud"><svg><use href="#t-cloud"/></svg></button>
        <button aria-label="Dish"><svg><use href="#t-dish"/></svg></button>
        <button class="running" aria-label="AutoCAD LT"><svg viewBox="0 0 20 20"><use href="#t-acad"/><text x="6" y="11" font-size="11" font-weight="700" fill="#fff">A</text><text x="8" y="19" font-size="4" font-weight="700" fill="#fff">LT</text></svg></button>
        <button class="running small" aria-label="Snipping Tool"><svg><use href="#t-snip"/></svg></button>
      </div>
    </div>
    <div class="tray">
      <button aria-label="Hidden icons"><svg viewBox="0 0 12 12"><path d="M2 8l4-4 4 4"/></svg></button>
      <button class="net" aria-label="Network and sound">
        <svg viewBox="0 0 12 12"><path d="M0 5q6-5 12 0M2 7.500q4-4 8 0M4 9.500q2-2 4 0"/><circle cx="6" cy="10.500" r="1" fill="#fff" stroke="none"/></svg>
        <svg viewBox="0 0 12 12"><path d="M1 4.500h2L6 2v8L3 7.500H1zM8 4q1 2 0 4M10 2.500q2 3.500 0 7"/></svg>
        <svg viewBox="0 0 12 12"><rect x=".5" y="2.500" width="9.500" height="7" rx="1.5"/><path d="M2 4h3v4H2z" fill="#fff"/><path d="M11.500 4.500v3"/></svg>
      </button>
      <button class="time">7:48 PM<br>8/9/2024</button>
      <button aria-label="Notifications"><svg viewBox="0 0 12 12"><path d="M2 9V5a4 4 0 0 1 8 0v4l1 1H1z" fill="#e6e6e6"/><path d="M5 4h2L5 7h2M8 1.500h3L8.500 4H11" stroke="#444" stroke-width=".9"/><path d="M4.500 11.500h3"/></svg></button>
    </div>
  </div>
</body>
</html>
```
FILE: styles.css
```css
* { box-sizing: border-box; }

body {
  margin: 0;
  min-height: 100vh;
  display: flex;
  flex-direction: column;
  background: #222831;
  color: #dcdfe3;
  font-family: "Open Sans", "Noto Sans", sans-serif;
  font-size: 9px;
  line-height: 12px;
  overflow: hidden;
}

button, input, select {
  font: inherit;
  color: inherit;
  background: none;
  border: 0;
  padding: 0;
  margin: 0;
  outline: none;
}

button {
  display: flex;
  align-items: center;
  justify-content: center;
  white-space: nowrap;
  cursor: pointer;
}

svg { flex: none; display: block; }

.sprite { position: absolute; width: 0; height: 0; }
.ico { width: 14px; height: 14px; }
.ico12 { width: 12px; height: 12px; }
.caret { width: 5px; height: 3px; }

/* title bar */
.titlebar {
  height: 22px;
  display: flex;
  align-items: center;
  padding-left: 11px;
  background: #475063;
}

.app-logo { height: 14px; color: #fff; background: #7b0c2e; }
.app-logo b { width: 16px; line-height: 14px; background: #e5144f; font-size: 11px; }
.app-logo small { width: 16px; font-size: 6px; font-weight: 700; }

.arrow { width: 9px; height: 18px; }
.arrow svg { width: 5px; height: 3px; }
.arrow.dim { color: #8a92a0; }

.qat { display: flex; margin-left: 4px; }
.qat button { width: 19px; height: 20px; }
.qat svg { width: 14px; height: 14px; }
.tool { width: 18px; height: 20px; }
.customize { width: 12px; }
.customize svg { width: 7px; height: 8px; }
.share { gap: 4px; margin-left: 5px; color: #8ccbf7; }
.share svg { width: 12px; height: 12px; }

.window-title {
  flex: 1;
  display: flex;
  justify-content: center;
  gap: 10px;
  color: #9ba2ae;
  white-space: nowrap;
}

.search-expand {
  margin-right: 4px;
  border: 3px solid transparent;
  border-left-color: #dfe1e3;
  border-right: 0;
}

.help-search {
  width: 141px;
  height: 18px;
  padding: 0 2px;
  background: #3e4758;
  border: 1px solid #313948;
  font-style: italic;
}

::placeholder { color: #c0c5cc; opacity: 1; }

.account { gap: 4px; width: 92px; padding-left: 3px; justify-content: flex-start; }
.account .caret { margin-left: auto; margin-right: 2px; }
.trial { width: 34px; height: 20px; gap: 4px; margin-left: 4px; background: #635bff; color: #e6e6ff; }
.trial svg { width: 12px; height: 12px; }
.app-store { width: 32px; height: 16px; gap: 4px; border-right: 1px solid #3b4453; }
.help { gap: 6px; margin-left: 6px; }
.help i { width: 13px; line-height: 13px; border-radius: 50%; background: #dfe1e3; color: #475063; font-style: normal; font-weight: 700; }

.win-controls { display: flex; margin-left: 16px; }
.win-controls button { width: 36px; height: 20px; }
.win-controls svg { width: 9px; height: 9px; fill: none; stroke: #dcdfe3; }

/* ribbon tabs */
.ribbon-tabs { height: 19px; display: flex; padding: 2px 2px 0; }
.ribbon-tabs button { padding: 0 7px; height: 17px; color: #b4b9c0; }
.ribbon-tabs .active { background: #3b4453; color: #fff; }
.ribbon-tabs .ribbon-toggle { gap: 3px; margin-left: 9px; }
.ribbon-toggle i { width: 12px; height: 6px; background: #eceded; }

/* ribbon */
.ribbon {
  display: grid;
  grid-template-columns: 172px 185px 149px 214px 84px 174px 53px 76px 70px;
  background: #3b4453;
}

.panel {
  position: relative;
  height: 77px;
  padding-top: 3px;
  border-right: 1px solid #2a313c;
}

.panel.last { border-right: 0; }
.panel-body { display: grid; height: 57px; }
.panel-title { width: 100%; margin-top: 3px; height: 14px; gap: 5px; display: flex; align-items: center; justify-content: center; }
.panel-title .caret { width: 6px; height: 4px; }

.big {
  flex-direction: column;
  justify-content: flex-start;
  height: 57px;
}

.big svg { width: 27px; height: 27px; margin-bottom: 3px; }
.big .letter { height: 30px; font-family: Lato, sans-serif; font-size: 31px; line-height: 26px; }

.big.more::after, .combo::after, .command .up {
  content: "";
  border: 3px solid transparent;
  border-top-color: #d0d3d7;
  border-bottom: 0;
}

.big.more::after { border-width: 2px; border-bottom: 0; margin-top: 3px; }

.rows { display: grid; grid-template-rows: repeat(3, 19px); align-items: center; }
.rows button { justify-content: flex-start; gap: 3px; height: 18px; }

.draw { grid-template-columns: 32px 33px 44px 28px 32px; padding-left: 2px; }
.draw .rows { padding-left: 4px; }
.draw .caret { margin-left: 2px; }
.modify { grid-template-columns: 53px 53px 53px 16px; padding-left: 4px; }
.modify .spread { padding-right: 4px; }
.modify .spread .caret { margin-left: auto; }
.modify .rows:last-child { padding-left: 3px; }
.annotation { grid-template-columns: 28px 53px 62px; padding-left: 5px; }
.annotation .rows { padding-left: 1px; }
.annotation .rows .caret { margin-left: 3px; }

.layers { grid-template-columns: 46px 162px; padding-left: 1px; }
.layers .rows { padding-left: 2px; }
.icon-row { display: flex; gap: 5px; padding-left: 1px; }
.icon-row button { min-width: 14px; }

.combo {
  display: flex;
  align-items: center;
  gap: 3px;
  height: 17px;
  padding: 0 2px;
  background: #4d586b;
  border: 1px solid #343c4a;
}

.combo select { flex: 1; min-width: 0; appearance: none; }
.layer-combo .ico { margin-left: -1px; }
.layer-combo .ico:first-child { margin-left: 0; }
.swatch { width: 12px; height: 12px; margin-right: 1px; background: #fff; }
.stroke { width: 50px; height: 1px; background: #dcdfe3; margin-left: 2px; }

.block { grid-template-columns: 32px 50px; }
.block .rows { padding-left: 1px; }
.block .rows button { gap: 4px; }
.props { grid-template-columns: 48px 17px 106px; }
.props .rows .ico { margin-left: 1px; }
.groups { grid-template-columns: 31px 21px; }
.groups .rows button { width: 18px; justify-content: center; }
.groups .on { background: #35536f; border: 1px solid #6fb9f5; }
.utils { grid-template-columns: 54px 20px; }
.utils .rows { padding-left: 1px; }
.clip { grid-template-columns: 42px 26px; }

.launcher { position: absolute; right: 3px; bottom: 4px; }
.launcher svg { width: 6px; height: 6px; }

/* document tabs */
.file-tabs {
  height: 24px;
  display: flex;
  align-items: center;
  padding-top: 2px;
  border-bottom: 3px solid #3b4453;
}

.file-tabs, .statusbar { padding-left: 12px; }
.menu svg { width: 14px; height: 12px; }
.add svg { width: 12px; height: 12px; }
.slash { width: 1px; height: 12px; background: #566071; transform: skewX(-20deg); }
.file-tabs .menu { margin-right: 10px; }
.start { width: 36px; }
.file { width: 79px; height: 19px; padding-left: 4px; justify-content: flex-start; }

.file.active {
  width: 98px;
  gap: 6px;
  padding-left: 10px;
  background: #3b4453;
  color: #fff;
  font-weight: 700;
  clip-path: polygon(8px 0, 100% 0, calc(100% - 8px) 100%, 0 100%);
}

.file.active svg { width: 8px; height: 8px; color: #c9ccd0; }
.blank { width: 34px; margin-right: 8px; }
.add { width: 32px; }

/* drawing area */
.canvas { flex: 1; position: relative; min-height: 300px; }
.drawing { position: absolute; inset: 0; width: 100%; height: 100%; fill: none; stroke: #c3c5c8; stroke-width: 1; }

.mdi-controls { position: absolute; top: 6px; right: 6px; display: flex; gap: 6px; }
.mdi-controls svg { width: 10px; height: 10px; fill: none; stroke: #e6e8ea; }

.navbar { position: absolute; top: 21px; right: 1px; width: 25px; background: #5b6064; border-radius: 2px; }
.navbar svg { width: 25px; height: 100px; fill: none; stroke: #454b56; }
.navbar text { fill: #43516b; stroke: none; }

.ucs { position: absolute; left: 8px; bottom: 0; width: 60px; height: 66px; fill: none; stroke: #b5b8bc; }
.ucs text { fill: #b5b8bc; stroke: none; font-family: Lato, sans-serif; font-size: 15px; font-weight: 300; }

.command {
  position: absolute;
  left: 20%;
  right: 20%;
  bottom: 0;
  height: 20px;
  display: flex;
  align-items: center;
  background: #292e3a;
}

.grip { width: 5px; height: 14px; margin-left: 3px; border-left: 2px dotted #a5abb3; border-right: 2px dotted #a5abb3; }
.command button { width: 19px; height: 18px; }
.command .x { width: 8px; height: 8px; }
.wrench { width: 13px; height: 13px; }

.command-box { flex: 1; height: 20px; display: flex; align-items: center; padding: 0 3px; background: #bdbfc1; }
.prompt { width: 20px; height: 12px; }
.command-box input { flex: 1; margin-left: 5px; font-family: "Liberation Mono", monospace; font-style: italic; }
.command-box input::placeholder { color: #55585c; }
.command .up { border-width: 3px; border-top: 0; border-bottom: 3px solid #4d5055; }

/* status bar */
.statusbar {
  height: 26px;
  display: flex;
  align-items: center;
  padding-bottom: 2px;
  border-top: 3px solid #3b4453;
}

.statusbar .menu { margin-right: 6px; }
.model { width: 54px; height: 19px; background: #3b4453; color: #fff; font-weight: 700; clip-path: polygon(8px 0, 100% 0, calc(100% - 8px) 100%, 0 100%); }
.layout { width: 42px; margin-right: 5px; }
.statusbar .slash + .layout { margin-left: 3px; }

.status-tools { margin-left: auto; display: flex; gap: 2px; }
.cluster { display: flex; height: 20px; background: #3b4453; }
.cluster button { width: 18px; height: 20px; }
.cluster .on { background: #5b8cc5; border-right: 1px solid #3b4453; }
.cluster .arrow { width: 14px; }
.cluster .space { width: 36px; color: #fff; }
.cluster .ratio { width: 28px; gap: 3px; }
.cluster.end { margin-left: 4px; }

/* taskbar */
.taskbar {
  height: 36px;
  display: grid;
  grid-template-columns: 1fr auto 1fr;
  align-items: center;
  background: linear-gradient(90deg, #2f2315, #262420 30%, #22211f 50%, #29221a);
}

.weather { justify-self: start; gap: 3px; margin-left: 15px; text-align: left; color: #fff; }
.weather svg { width: 22px; height: 24px; }
.weather em { font-style: normal; color: #c9c6c2; }

.apps { display: flex; align-items: center; padding-left: 7px; }
.apps button svg { width: 20px; height: 20px; }
.win-start { width: 24px; height: 36px; margin-right: 8px; }
.pins { width: 344px; display: grid; grid-template-columns: repeat(10, 1fr); }
.pins button { height: 36px; position: relative; }
.running::after { content: ""; position: absolute; bottom: 3px; width: 5px; height: 2px; border-radius: 1px; background: #a5a29e; }
.running.small::after { width: 2px; }

.win-search {
  width: 171px;
  height: 25px;
  margin-right: 2px;
  padding: 0 2px 0 8px;
  display: flex;
  align-items: center;
  border: 1px solid #52524f;
  border-radius: 13px;
  background: #3f3f3d;
}

.win-search svg { width: 12px; height: 12px; }
.win-search input { flex: 1; min-width: 0; margin-left: 7px; font-size: 10px; }
.win-search .books { width: 40px; height: 20px; }

.tray { justify-self: end; display: flex; align-items: center; margin-right: 14px; color: #fff; }
.tray svg { width: 12px; height: 12px; fill: none; stroke: #fff; }
.tray .net { gap: 7px; margin: 0 14px 0 13px; }
.time { text-align: right; margin-right: 7px; }
```
